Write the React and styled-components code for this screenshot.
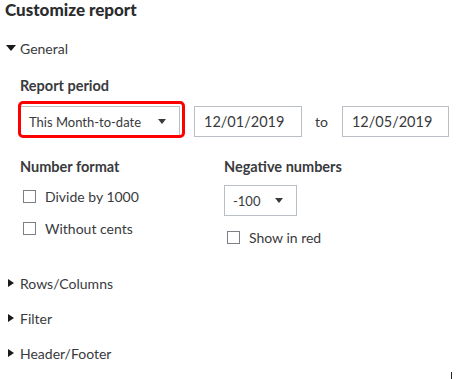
import styled, { createGlobalStyle } from "styled-components";

const GlobalStyle = createGlobalStyle`
  html, body {
    margin: 0;
    padding: 0;
    background: #fff;
  }
  body {
    font-family: Lato, "Open Sans", sans-serif;
    color: #393a3d;
  }
`;

const Page = styled.div`
  position: relative;
  width: 475px;
  height: 379px;
  overflow: hidden;
  padding: 0 0 0 5px;
  box-sizing: border-box;
`;

const Title = styled.h1`
  margin: 0;
  font-size: 17px;
  line-height: 20px;
  font-weight: 900;
  color: #2b2c2e;
`;

const SectionHead = styled.div`
  display: flex;
  align-items: center;
  height: 18px;
  margin-top: ${(p) => p.$top || 0}px;
  font-size: 14px;
  color: #393a3d;
`;

const Caret = styled.span`
  width: 15px;
  display: flex;
  align-items: center;
  padding-left: ${(p) => (p.$open ? 1 : 3)}px;
  box-sizing: border-box;
  &::before {
    content: "";
    display: block;
    width: 0;
    height: 0;
    ${(p) =>
      p.$open
        ? `border-left: 5px solid transparent;
           border-right: 5px solid transparent;
           border-top: 6px solid #1a1a1a;`
        : `border-top: 4px solid transparent;
           border-bottom: 4px solid transparent;
           border-left: 6px solid #1a1a1a;`}
  }
`;

const Body = styled.div`
  padding-left: 15px;
`;

const Label = styled.div`
  font-size: 14.5px;
  line-height: 18px;
  font-weight: 700;
  color: #393a3d;
  margin-top: ${(p) => p.$top || 0}px;
`;

const PeriodRow = styled.div`
  display: flex;
  align-items: center;
  margin-top: 11px;
  gap: 13px;
`;

const Highlight = styled.div`
  position: relative;
  &::after {
    content: "";
    position: absolute;
    left: -2px;
    top: -5px;
    right: -5px;
    bottom: -1px;
    border: 3px solid #f00;
    border-radius: 5px;
    pointer-events: none;
  }
`;

const Select = styled.div`
  width: ${(p) => p.$w}px;
  height: 31px;
  box-sizing: border-box;
  border: 1px solid #babec5;
  display: flex;
  align-items: center;
  justify-content: space-between;
  padding: 0 13px 0 8px;
  font-size: 13px;
  color: #393a3d;
  background: #fff;
  &::after {
    content: "";
    border-left: 4px solid transparent;
    border-right: 4px solid transparent;
    border-top: 5px solid #393a3d;
  }
`;

const DateInput = styled.div`
  width: ${(p) => p.$w}px;
  height: 31px;
  box-sizing: border-box;
  border: 1px solid #babec5;
  display: flex;
  align-items: center;
  padding-left: 9px;
  font-size: 14.5px;
  color: #393a3d;
`;

const To = styled.span`
  font-size: 14px;
  margin-right: 1px;
`;

const Columns = styled.div`
  display: flex;
  margin-top: 21px;
`;

const Column = styled.div`
  width: ${(p) => p.$w}px;
  display: flex;
  flex-direction: column;
`;

const CheckRow = styled.label`
  display: flex;
  align-items: center;
  gap: 9px;
  height: 18px;
  margin-top: ${(p) => p.$top}px;
  padding-left: 3px;
  font-size: 14px;
  color: #393a3d;
`;

const Box = styled.span`
  width: 13px;
  height: 13px;
  box-sizing: border-box;
  border: 1px solid #7d7f85;
  background: #fff;
  flex: none;
`;

const Cursor = styled.span`
  position: absolute;
  left: 451px;
  top: 372px;
  width: 1px;
  height: 7px;
  background: #222;
`;

const Collapsed = ({ children, top }) => (
  <SectionHead $top={top}>
    <Caret />
    {children}
  </SectionHead>
);

export default function App() {
  return (
    <>
      <GlobalStyle />
      <Page>
        <Title>Customize report</Title>
        <SectionHead $top={19}>
          <Caret $open />
          General
        </SectionHead>
        <Body>
          <Label $top={20}>Report period</Label>
          <PeriodRow>
            <Highlight>
              <Select $w={160}>This Month-to-date</Select>
            </Highlight>
            <DateInput $w={108} style={{ marginLeft: 1 }}>12/01/2019</DateInput>
            <To>to</To>
            <DateInput $w={107}>12/05/2019</DateInput>
          </PeriodRow>
          <Columns>
            <Column $w={204}>
              <Label>Number format</Label>
              <CheckRow $top={11}>
                <Box />
                Divide by 1000
              </CheckRow>
              <CheckRow $top={14}>
                <Box />
                Without cents
              </CheckRow>
            </Column>
            <Column $w={200}>
              <Label>Negative numbers</Label>
              <Select $w={73} style={{ marginTop: 9 }}>-100</Select>
              <CheckRow $top={12}>
                <Box />
                Show in red
              </CheckRow>
            </Column>
          </Columns>
        </Body>
        <Collapsed top={28}>Rows/Columns</Collapsed>
        <Collapsed top={17}>Filter</Collapsed>
        <Collapsed top={17}>Header/Footer</Collapsed>
        <Cursor />
      </Page>
    </>
  );
}
